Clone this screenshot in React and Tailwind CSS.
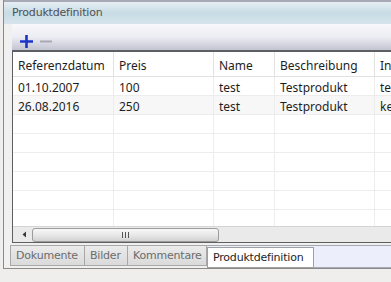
import React from 'react';

const columns = [
	{ key: 'datum', label: 'Referenzdatum', width: 'w-[101px]' },
	{ key: 'preis', label: 'Preis', width: 'w-[100px]' },
	{ key: 'name', label: 'Name', width: 'w-[61px]' },
	{ key: 'beschreibung', label: 'Beschreibung', width: 'w-[100px]' },
	{ key: 'info', label: 'Info', width: 'w-[100px]' },
];

const rows = [
	{ datum: '01.10.2007', preis: '100', name: 'test', beschreibung: 'Testprodukt', info: 'test' },
	{ datum: '26.08.2016', preis: '250', name: 'test', beschreibung: 'Testprodukt', info: 'keine' },
];

const tabs = [
	{ label: 'Dokumente', width: 'w-[73px]' },
	{ label: 'Bilder', width: 'w-[43px]' },
	{ label: 'Kommentare', width: 'w-[79px]' },
];

function Row( { row, shaded } ) {
	return (
		<div className={ `flex h-[19px] shrink-0 border-b border-[#ededed] ${ shaded ? 'bg-[#f7f7f7]' : 'bg-white' }` }>
			{ columns.map( ( col ) => (
				<div key={ col.key } className={ `${ col.width } shrink-0 border-r border-[#ededed] pl-[5px] pt-[2px] leading-[18px] whitespace-nowrap` }>
					{ row ? row[ col.key ] : '' }
				</div>
			) ) }
		</div>
	);
}

export default function App() {
	return (
		<div className="w-[391px] h-[282px] overflow-hidden bg-[#f0eded] text-[#1e1e1e]" style={ { fontFamily: '"DejaVu Sans", sans-serif' } }>
			<div className="h-[269px] ml-[3px] border-l border-b border-[#8a8a8a] bg-[#f0f0f0] flex flex-col">
				<div className="h-[2px] bg-[#a9a9b6] shrink-0" />
				<div className="h-[22px] shrink-0 bg-gradient-to-b from-[#e6eef3] via-[#c8dbe5] to-[#d6e4ec] pl-[8px] text-[11px] tracking-[-0.2px] leading-[22px] text-[#505050]">
					Produktdefinition
				</div>
				<div className="ml-[8px] flex flex-col flex-1 min-h-0">
					<div className="h-[28px] shrink-0 bg-gradient-to-b from-[#f8f8fc] via-[#ececf3] to-[#c4c4d2] border-b-2 border-[#5e5e66] flex items-center gap-[5px] pl-[7px] pt-[8px]">
						<svg width="15" height="15" viewBox="0 0 15 15">
							<path d="M7.5 1v13M1 7.5h13" stroke="#1c34c8" strokeWidth="2.6" />
						</svg>
						<svg width="14" height="15" viewBox="0 0 14 15">
							<path d="M1 7.5h12" stroke="#a9a9b3" strokeWidth="2" />
						</svg>
					</div>
					<div className="flex-1 min-h-0 border-l border-b border-[#5f5f5f] bg-white flex flex-col text-[12px] overflow-hidden" style={ { fontFamily: '"Noto Sans", sans-serif' } }>
						<div className="flex-1 min-h-0 overflow-hidden flex flex-col">
							<div className="flex h-[25px] shrink-0 border-b border-[#e2e2e2]">
								{ columns.map( ( col ) => (
									<div key={ col.key } className={ `${ col.width } shrink-0 border-r border-[#e2e2e2] pl-[5px] pt-[5px] leading-[18px] whitespace-nowrap` }>
										{ col.label }
									</div>
								) ) }
							</div>
							{ rows.map( ( row, i ) => (
								<Row key={ row.datum } row={ row } shaded={ i === 1 } />
							) ) }
							{ [ 0, 1, 2, 3, 4, 5 ].map( ( i ) => (
								<Row key={ i } />
							) ) }
						</div>
						<div className="h-[16px] shrink-0 bg-[#eaeaea] border-t border-[#d4d4d4] flex items-center">
							<div className="w-[19px] flex justify-center pl-[4px]">
								<svg width="5" height="7" viewBox="0 0 5 7">
									<path d="M4 0.5v6L0.5 3.5z" fill="#3a3a3a" />
								</svg>
							</div>
							<div className="w-[187px] h-[14px] rounded-[3px] border border-[#9c9c9c] bg-gradient-to-b from-[#f7f7f7] via-[#e8e8e8] to-[#d2d2d2] flex items-center justify-center gap-[2px]">
								<span className="w-px h-[6px] bg-[#555]" />
								<span className="w-px h-[6px] bg-[#555]" />
								<span className="w-px h-[6px] bg-[#555]" />
							</div>
						</div>
					</div>
					<div className="h-[24px] shrink-0 mt-[1px] -ml-[2px] flex items-start text-[11px] tracking-[-0.2px] text-[#6c6c6c]">
						<div className="flex h-[21px] mt-[1px] border border-[#a8a8a8] bg-gradient-to-b from-[#ebebeb] to-[#dadada]">
							{ tabs.map( ( tab, i ) => (
								<div key={ tab.label } className={ `${ tab.width } shrink-0 pl-[5px] leading-[20px] ${ i > 0 ? 'border-l border-[#a8a8a8]' : '' }` }>
									{ tab.label }
								</div>
							) ) }
						</div>
						<div className="flex-1 h-[23px] mt-[1px] border-t border-b border-[#a8a8b0] bg-[#eceefb] flex">
							<div className="w-[107px] h-[21px] mt-px bg-white border border-[#a0a0a0] pl-[5px] leading-[19px] text-[#1e1e1e]">
								Produktdefinition
							</div>
						</div>
					</div>
				</div>
			</div>
		</div>
	);
}
